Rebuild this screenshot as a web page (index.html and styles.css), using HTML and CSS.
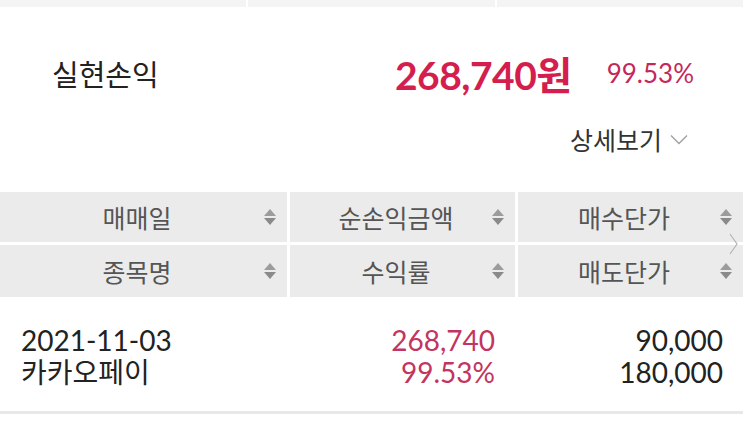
FILE: index.html
```html
<!DOCTYPE html>
<html lang="ko">
<head>
    <meta charset="UTF-8">
    <meta name="viewport" content="width=device-width, initial-scale=1.0">
    <title>실현손익</title>
    <link rel="stylesheet" href="styles.css">
</head>
<body>
    <div class="topbar">
        <div></div>
        <div></div>
        <div></div>
    </div>

    <div class="summary">
        <div class="summary-row">
            <span class="summary-label">실현손익</span>
            <span class="summary-amount">268,740원</span>
            <span class="summary-rate">99.53%</span>
        </div>
        <div class="detail-row">
            <span class="detail-link">상세보기
                <svg class="chevron-down" width="18" height="11" viewBox="0 0 18 11">
                    <polyline points="1,1.5 9,9.5 17,1.5" fill="none" stroke="#a0a0a0" stroke-width="1.4"/>
                </svg>
            </span>
        </div>
    </div>

    <div class="table-head">
        <div class="head-cell"><span class="head-text">매매일</span><span class="sort"></span></div>
        <div class="head-cell"><span class="head-text">순손익금액</span><span class="sort"></span></div>
        <div class="head-cell"><span class="head-text">매수단가</span><span class="sort"></span></div>
        <div class="head-cell"><span class="head-text">종목명</span><span class="sort"></span></div>
        <div class="head-cell"><span class="head-text">수익률</span><span class="sort"></span></div>
        <div class="head-cell"><span class="head-text">매도단가</span><span class="sort"></span></div>
        <svg class="scroll-next" width="10" height="22" viewBox="0 0 10 22">
            <polyline points="1,1 8,11 1,21" fill="none" stroke="#b8b8b8" stroke-width="1.3"/>
        </svg>
    </div>

    <div class="table-body">
        <div class="cell">2021-11-03</div>
        <div class="cell num red">268,740</div>
        <div class="cell num">90,000</div>
        <div class="cell">카카오페이</div>
        <div class="cell num red">99.53%</div>
        <div class="cell num">180,000</div>
    </div>
    <div class="divider"></div>
</body>
</html>
```

FILE: styles.css
```css
/* 기본 */
body {
    margin: 0;
    background-color: #fff;
    font-family: Lato, "Noto Sans CJK KR", sans-serif;
    color: #222;
    width: 743px;
    overflow: hidden;
}

.topbar {
    display: grid;
    grid-template-columns: 246px 247px 1fr;
    column-gap: 2px;
    height: 7px;
}

.topbar div {
    background-color: #f4f4f4;
}

/* 요약 */
.summary {
    padding-top: 33px;
}

.summary-row {
    display: flex;
    align-items: center;
    height: 66px;
    padding: 0 49px 0 52px;
}

.summary-label {
    flex: 1;
    font-size: 29px;
    color: #222;
}

.summary-amount {
    font-size: 39px;
    font-weight: bold;
    color: #d41e4e;
    letter-spacing: -0.5px;
}

.summary-rate {
    margin-left: 35px;
    font-size: 26px;
    color: #c4285a;
}

.detail-row {
    display: flex;
    justify-content: flex-end;
    align-items: center;
    height: 40px;
    margin-top: 13px;
    padding-right: 55px;
}

.detail-link {
    display: flex;
    align-items: center;
    font-size: 25px;
    color: #333;
}

.chevron-down {
    margin-left: 8px;
}

/* 테이블 헤더 */
.table-head {
    position: relative;
    display: grid;
    grid-template-columns: 287px 225px 1fr;
    grid-template-rows: 50px 52px;
    gap: 3px;
    margin-top: 33px;
}

.head-cell {
    display: flex;
    align-items: center;
    background-color: #ebebeb;
    padding-left: 10px;
}

.head-text {
    flex: 1;
    text-align: center;
    font-size: 25px;
    color: #555;
}

.sort {
    width: 12px;
    height: 16px;
    margin-right: 11px;
    position: relative;
}

.sort::before,
.sort::after {
    content: "";
    position: absolute;
    left: 0;
    border-left: 6px solid transparent;
    border-right: 6px solid transparent;
}

.sort::before {
    top: 0;
    border-bottom: 7px solid #9c9c9c;
}

.sort::after {
    top: 9px;
    border-top: 7px solid #8a8a8a;
}

.scroll-next {
    position: absolute;
    right: 4px;
    top: 41px;
}

/* 테이블 내용 */
.table-body {
    display: grid;
    grid-template-columns: 287px 225px 1fr;
    column-gap: 3px;
    padding: 27px 0 23px;
}

.cell {
    font-size: 28px;
    line-height: 32px;
    padding-left: 21px;
    color: #222;
}

.cell.num {
    text-align: right;
    padding-left: 0;
    padding-right: 20px;
}

.cell.red {
    color: #c33461;
}

.divider {
    height: 3px;
    background-color: #e8e8e8;
}
```
